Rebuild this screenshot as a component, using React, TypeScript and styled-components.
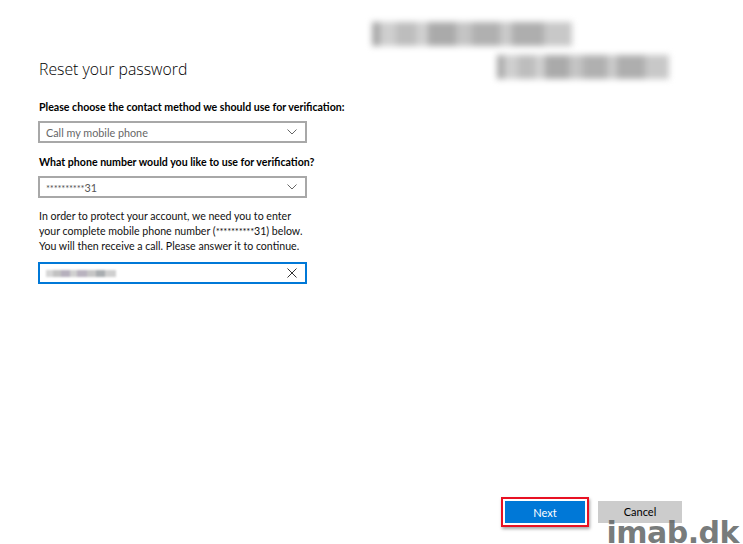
import React from "react";
import styled, { createGlobalStyle } from "styled-components";

const Global = createGlobalStyle`
  html, body { margin: 0; padding: 0; background: #fff; }
  body { font-family: Lato, "Noto Sans", Arial, sans-serif; color: #000; }
  * { box-sizing: border-box; }
`;

const Page = styled.div`
  position: relative;
  width: 743px;
  height: 544px;
  display: flex;
  flex-direction: column;
  overflow: hidden;
`;

const Top = styled.div`
  display: flex;
  flex-direction: row;
`;

const Form = styled.div`
  width: 372px;
  padding: 57px 0 0 39px;
  display: flex;
  flex-direction: column;
`;

const Title = styled.h1`
  margin: 0 0 19px 0;
  font-family: "Open Sans", "Noto Sans", sans-serif;
  font-weight: 300;
  font-size: 15.8px;
  line-height: 24px;
  color: #000;
`;

const Label = styled.div`
  font-family: Lato, "Noto Sans", sans-serif;
  font-weight: 700;
  font-size: 10.6px;
  line-height: 14px;
  margin-bottom: 7px;
  white-space: nowrap;
`;

const Select = styled.div<{ $focused?: boolean; $gap: number }>`
  width: 269px;
  height: 22px;
  margin-left: -1px;
  border: 2px solid ${(p) => (p.$focused ? "#0078d7" : "#a8a8a8")};
  display: flex;
  align-items: center;
  padding: 0 8px 0 6px;
  margin-bottom: ${(p) => p.$gap}px;
`;

const SelectText = styled.span<{ $muted?: boolean }>`
  flex: 1;
  font-family: Lato, "Noto Sans", sans-serif;
  font-size: 10.8px;
  color: ${(p) => (p.$muted ? "#666" : "#555")};
  white-space: nowrap;
`;

const Para = styled.p`
  margin: 0 0 8px 0;
  font-family: Lato, "Noto Sans", sans-serif;
  font-size: 10.6px;
  line-height: 15px;
  color: #111;
`;

const Line = styled.span`
  display: block;
  white-space: nowrap;
`;

const Stars = styled.span`
  font-size: 9.5px;
  letter-spacing: -0.2px;
`;

const BlurValue = styled.span`
  flex: 1;
  display: flex;
  align-items: center;
`;

const BlurBar = styled.span`
  display: block;
  width: 70px;
  height: 7px;
  filter: blur(1px);
  background: linear-gradient(
    90deg,
    #d6d6d6 0 10%,
    #c2c2c2 10% 22%,
    #b6b0bd 22% 34%,
    #d0d0d0 34% 44%,
    #b9b3bf 44% 58%,
    #c6c6c6 58% 72%,
    #a9adb0 72% 84%,
    #cfcfcf 84% 100%
  );
`;

const Redact = styled.div`
  padding-top: 22px;
  display: flex;
  flex-direction: column;
`;

const Smudge = styled.div<{ $w: number; $ml: number }>`
  width: ${(p) => p.$w}px;
  height: 24px;
  margin-left: ${(p) => p.$ml}px;
  margin-bottom: 9px;
  filter: blur(3px);
  background: linear-gradient(
    90deg,
    #a8a8a8 0 4%,
    #cfcfcf 4% 12%,
    #bdbdbd 12% 22%,
    #d0d0d0 22% 28%,
    #aaaaaa 28% 42%,
    #c4c4c4 42% 50%,
    #b0b0b0 50% 64%,
    #cacaca 64% 70%,
    #aeaeae 70% 86%,
    #c8c8c8 86% 100%
  );
`;

const Actions = styled.div`
  margin-top: auto;
  display: flex;
  justify-content: flex-end;
  align-items: center;
  gap: 9px;
  padding: 0 61px 17px 0;
`;

const Highlight = styled.div`
  border: 2px solid #e81123;
  padding: 2px;
  box-shadow: 1px 2px 3px rgba(0, 0, 0, 0.35);
  background: #fff;
`;

const Button = styled.button<{ $primary?: boolean }>`
  width: ${(p) => (p.$primary ? 80 : 84)}px;
  height: 22px;
  border: none;
  margin: 0;
  padding: 0;
  font-family: Lato, "Noto Sans", sans-serif;
  font-size: 11px;
  color: ${(p) => (p.$primary ? "#fff" : "#000")};
  background: ${(p) => (p.$primary ? "#0078d7" : "#cccccc")};
`;

const Watermark = styled.div`
  position: absolute;
  right: 4px;
  bottom: -6px;
  font-family: "DejaVu Sans", sans-serif;
  font-weight: 700;
  font-size: 30px;
  letter-spacing: -0.5px;
  color: rgba(95, 100, 100, 0.85);
`;

const Chevron = () => (
  <svg width="10" height="6" viewBox="0 0 10 6">
    <path d="M0.5 0.5 L5 5 L9.5 0.5" fill="none" stroke="#666" strokeWidth="1" />
  </svg>
);

const Clear = () => (
  <svg width="10" height="10" viewBox="0 0 10 10">
    <path d="M0.5 0.5 L9.5 9.5 M9.5 0.5 L0.5 9.5" fill="none" stroke="#333" strokeWidth="1" />
  </svg>
);

export default function App() {
  return (
    <>
      <Global />
      <Page>
        <Top>
          <Form>
            <Title>Reset your password</Title>
            <Label>Please choose the contact method we should use for verification:</Label>
            <Select $gap={12}>
              <SelectText $muted>Call my mobile phone</SelectText>
              <Chevron />
            </Select>
            <Label>What phone number would you like to use for verification?</Label>
            <Select $gap={11}>
              <SelectText>
                <Stars>**********</Stars>31
              </SelectText>
              <Chevron />
            </Select>
            <Para>
              <Line>In order to protect your account, we need you to enter</Line>
              <Line>
                your complete mobile phone number (<Stars>**********</Stars>31) below.
              </Line>
              <Line>You will then receive a call. Please answer it to continue.</Line>
            </Para>
            <Select $focused $gap={0}>
              <BlurValue>
                <BlurBar />
              </BlurValue>
              <Clear />
            </Select>
          </Form>
          <Redact>
            <Smudge $w={200} $ml={0} />
            <Smudge $w={172} $ml={125} />
          </Redact>
        </Top>
        <Actions>
          <Highlight>
            <Button $primary>Next</Button>
          </Highlight>
          <Button>Cancel</Button>
        </Actions>
        <Watermark>imab.dk</Watermark>
      </Page>
    </>
  );
}
